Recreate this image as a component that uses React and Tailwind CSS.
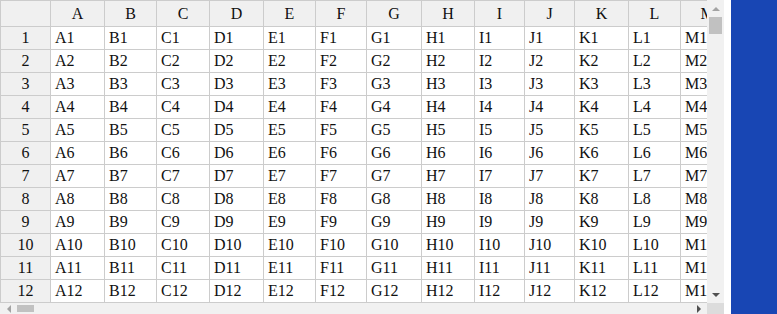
import React from "react";

const columns = [
  { key: "A", width: 54 },
  { key: "B", width: 52 },
  { key: "C", width: 53 },
  { key: "D", width: 54 },
  { key: "E", width: 52 },
  { key: "F", width: 51 },
  { key: "G", width: 55 },
  { key: "H", width: 53 },
  { key: "I", width: 50 },
  { key: "J", width: 50 },
  { key: "K", width: 54 },
  { key: "L", width: 52 },
  { key: "M", width: 54 },
];

const rows = Array.from({ length: 12 }, (_, i) => i + 1);

const Arrow = ({ dir, color }) => {
  const points = {
    up: "0,4 4,0 8,4",
    down: "0,0 8,0 4,4",
    left: "4,0 4,8 0,4",
    right: "0,0 0,8 4,4",
  }[dir];
  const vertical = dir === "up" || dir === "down";
  return (
    <svg width={vertical ? 8 : 4} height={vertical ? 4 : 8} viewBox={vertical ? "0 0 8 4" : "0 0 4 8"}>
      <polygon points={points} fill={color} />
    </svg>
  );
};

const Grid = () => {
  return (
    <table
      className="w-[735px] min-w-[735px] border-separate border-spacing-0 table-fixed text-[16px] text-[#111]"
      style={{ fontFamily: '"Liberation Serif", "Times New Roman", serif' }}
    >
      <colgroup>
        <col className="w-[51px]" />
        {columns.map((c) => (
          <col key={c.key} style={{ width: c.width }} />
        ))}
      </colgroup>
      <thead>
        <tr className="h-[27px]">
          <th className="bg-[#f0f0f0] border border-[#ccc] font-normal"></th>
          {columns.map((c) => (
            <th
              key={c.key}
              className="bg-[#f0f0f0] border-t border-r border-b border-[#ccc] font-normal text-center"
            >
              {c.key}
            </th>
          ))}
        </tr>
      </thead>
      <tbody>
        {rows.map((r) => (
          <tr key={r} className="h-[23px]">
            <td className="bg-[#f0f0f0] border-l border-r border-b border-[#ccc] text-center leading-none">
              {r}
            </td>
            {columns.map((c) => (
              <td
                key={c.key}
                className="border-r border-b border-[#ccc] px-[4px] leading-none whitespace-nowrap overflow-hidden"
              >
                {c.key}
                {r}
              </td>
            ))}
          </tr>
        ))}
      </tbody>
    </table>
  );
};

export default function App() {
  return (
    <div className="flex h-[314px] w-[777px] overflow-hidden bg-white">
      <div className="flex w-[724px] flex-col">
        <div className="flex h-[304px]">
          <div className="w-[707px] overflow-hidden">
            <Grid />
          </div>
          <div className="flex w-[17px] flex-col bg-[#f1f1f1]">
            <div className="flex h-[17px] items-center justify-center">
              <Arrow dir="up" color="#a3a3a3" />
            </div>
            <div className="mx-[2px] h-[17px] bg-[#c1c1c1]" />
            <div className="flex-1" />
            <div className="flex h-[17px] items-center justify-center">
              <Arrow dir="down" color="#505050" />
            </div>
          </div>
        </div>
        <div className="flex h-[17px] bg-[#f1f1f1]">
          <div className="flex w-[17px] items-center justify-center">
            <Arrow dir="left" color="#a3a3a3" />
          </div>
          <div className="my-[2px] w-[17px] bg-[#c1c1c1]" />
          <div className="flex-1" />
          <div className="flex w-[17px] items-center justify-center">
            <Arrow dir="right" color="#505050" />
          </div>
          <div className="w-[17px] bg-[#dcdcdc]" />
        </div>
      </div>
      <div className="w-[7px]" />
      <div className="flex-1 bg-[#1846b4]" />
    </div>
  );
}
